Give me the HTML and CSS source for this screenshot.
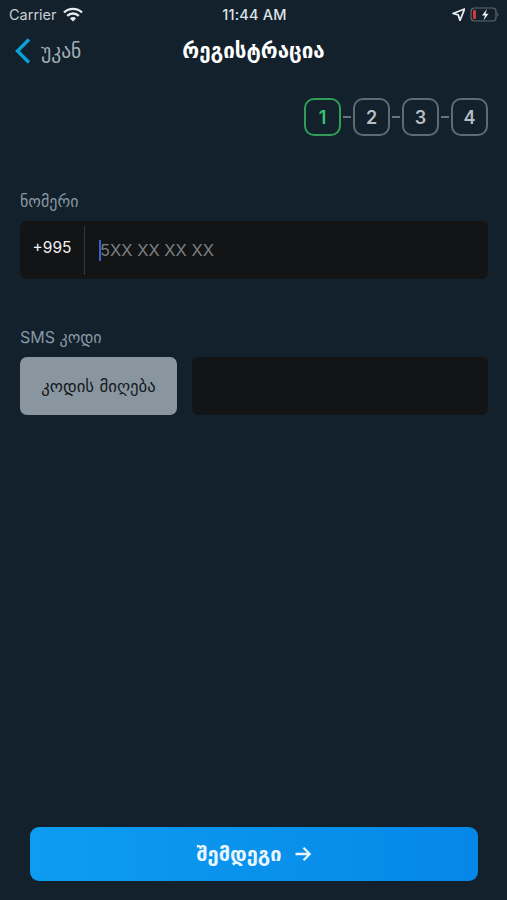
FILE: index.html
```
<!DOCTYPE html>
<html lang="ka">
<head>
<meta charset="utf-8">
<title>რეგისტრაცია</title>
<link rel="stylesheet" href="styles.css">
</head>
<body>
<div class="screen">
  <div class="status">
    <div class="status-left">
      <span>Carrier</span>
      <svg class="wifi" width="20" height="15" viewBox="0 0 20 15"><path d="M1 5.500a13 13 0 0 1 18 0" fill="none" stroke="#e8ecef" stroke-width="2.400"/><path d="M4.200 8.800a8.500 8.500 0 0 1 11.600 0" fill="none" stroke="#e8ecef" stroke-width="2.400"/><path d="M7 11.400a4 4 0 0 1 6 0L10 14.600z" fill="#e8ecef"/></svg>
    </div>
    <div class="status-time">11:44 AM</div>
    <div class="status-right">
      <svg width="13" height="13" viewBox="0 0 13 13"><path d="M12.500 1 1 5.500l5.200 1.400L8 12.500z" fill="none" stroke="#e8ecef" stroke-width="1.800" stroke-linejoin="round"/></svg>
      <svg width="30" height="15" viewBox="0 0 30 15"><rect x="1" y="1" width="25" height="13" rx="3.500" fill="none" stroke="#5f6b73" stroke-width="1.200"/><rect x="3" y="3" width="3" height="9" rx="1" fill="#d8343a"/><path d="M17 2 12 8.500h3l-1.500 5 5-6.700h-3z" fill="#f2f4f5"/><path d="M27.500 5.500c1.300.4 1.300 3.600 0 4z" fill="#5f6b73"/></svg>
    </div>
  </div>
  <header class="nav">
    <div class="back">
      <svg width="18" height="28" viewBox="0 0 18 28"><path d="M15 2.500 3.500 14 15 25.500" fill="none" stroke="#0c9fd8" stroke-width="3.400"/></svg>
      <span>უკან</span>
    </div>
    <h1 class="title">რეგისტრაცია</h1>
  </header>
  <div class="steps">
    <div class="step step-active">1</div>
    <span class="dash"></span>
    <div class="step">2</div>
    <span class="dash"></span>
    <div class="step">3</div>
    <span class="dash"></span>
    <div class="step">4</div>
  </div>
  <section class="phone-group">
    <label class="label">ნომერი</label>
    <div class="phone-field">
      <div class="prefix">+995</div>
      <div class="phone-input"><i class="caret"></i><span>5XX XX XX XX</span></div>
    </div>
  </section>
  <section class="sms-group">
    <label class="label">SMS კოდი</label>
    <div class="sms-row">
      <div class="code-btn">კოდის მიღება</div>
      <div class="code-input"></div>
    </div>
  </section>
  <div class="spacer"></div>
  <div class="next">
    <span>შემდეგი</span>
    <svg width="18" height="16" viewBox="0 0 18 16"><path d="M1.500 8h14M9.500 1.800 15.700 8l-6.200 6.200" fill="none" stroke="#e8f5ff" stroke-width="2.300"/></svg>
  </div>
</div>
</body>
</html>
```
FILE: styles.css
```
* { box-sizing: border-box; }
html, body { margin: 0; height: 100%; }
body {
  background: #12212c;
  font-family: "DejaVu Sans", "Noto Sans", sans-serif;
  color: #fff;
}
.screen {
  height: 900px;
  display: flex;
  flex-direction: column;
  padding-bottom: 19px;
  overflow: hidden;
}
.status {
  height: 28px;
  padding: 0 7px 0 9px;
  display: grid;
  grid-template-columns: 1fr auto 1fr;
  align-items: center;
  font-family: "Inter", "Liberation Sans", sans-serif;
  font-size: 14.500px;
  color: #dfe4e8;
}
.status-left { display: flex; align-items: center; gap: 6px; }
.status-left span { color: #c8ced3; }
.status-right { display: flex; justify-content: flex-end; align-items: center; gap: 5px; }
.status-time { font-weight: 500; font-size: 14.500px; letter-spacing: 0.200px; }
.nav {
  height: 46px;
  position: relative;
  display: flex;
  align-items: center;
  justify-content: center;
}
.back {
  position: absolute;
  left: 14px;
  top: 9px;
  display: flex;
  align-items: center;
  gap: 9px;
  font-size: 19.500px;
  color: #a3aeb5;
}
.title {
  margin: 0;
  font-size: 20.500px;
  font-weight: 700;
  color: #fff;
}
.steps {
  margin-top: 24px;
  padding-right: 19px;
  display: flex;
  justify-content: flex-end;
  align-items: center;
}
.step {
  width: 37px;
  height: 38px;
  border: 2px solid #5d6b73;
  border-radius: 10px;
  display: flex;
  align-items: center;
  justify-content: center;
  font-family: "Inter", "Liberation Sans", sans-serif;
  font-size: 18px;
  font-weight: 600;
  color: #b6bec3;
}
.step-active { border-color: #2f9d58; color: #35c76b; }
.dash { width: 8px; height: 1.500px; margin: 0 2px; background: #68747b; }
.phone-group { margin-top: 55px; padding: 0 19px 0 20px; }
.sms-group { margin-top: 48px; padding: 0 19px 0 20px; }
.label {
  display: block;
  height: 30px;
  font-family: "Inter", "DejaVu Sans", sans-serif;
  font-size: 16px;
  line-height: 20px;
  color: #8a98a2;
}
.phone-field {
  height: 58px;
  background: #121416;
  border-radius: 7px;
  display: flex;
  align-items: center;
}
.prefix {
  width: 65px;
  height: 49px;
  border-right: 1px solid #33373a;
  display: flex;
  align-items: center;
  justify-content: center;
  padding-bottom: 5px;
  font-family: "Inter", "Liberation Sans", sans-serif;
  font-size: 15.500px;
  color: #f0f1f2;
}
.phone-input {
  flex: 1;
  display: flex;
  align-items: center;
  padding-left: 14px;
  font-family: "Inter", "Liberation Sans", sans-serif;
  font-size: 16.500px;
  color: #7b7e80;
}
.caret { width: 2px; height: 21px; margin-right: -1px; background: #3a5fc8; }
.sms-row { display: flex; gap: 15px; height: 58px; }
.code-btn {
  width: 157px;
  background: #8a969f;
  border-radius: 7px;
  display: flex;
  align-items: center;
  justify-content: center;
  font-size: 16.800px;
  color: #14191d;
}
.code-input { flex: 1; background: #121416; border-radius: 7px; }
.spacer { flex: 1; }
.next {
  margin: 0 29px 0 30px;
  height: 54px;
  border-radius: 9px;
  background: linear-gradient(90deg, #0d9df0, #0587e8);
  display: flex;
  align-items: center;
  justify-content: center;
  gap: 12px;
  font-size: 20px;
  font-weight: 700;
  color: #eaf6ff;
}
```
